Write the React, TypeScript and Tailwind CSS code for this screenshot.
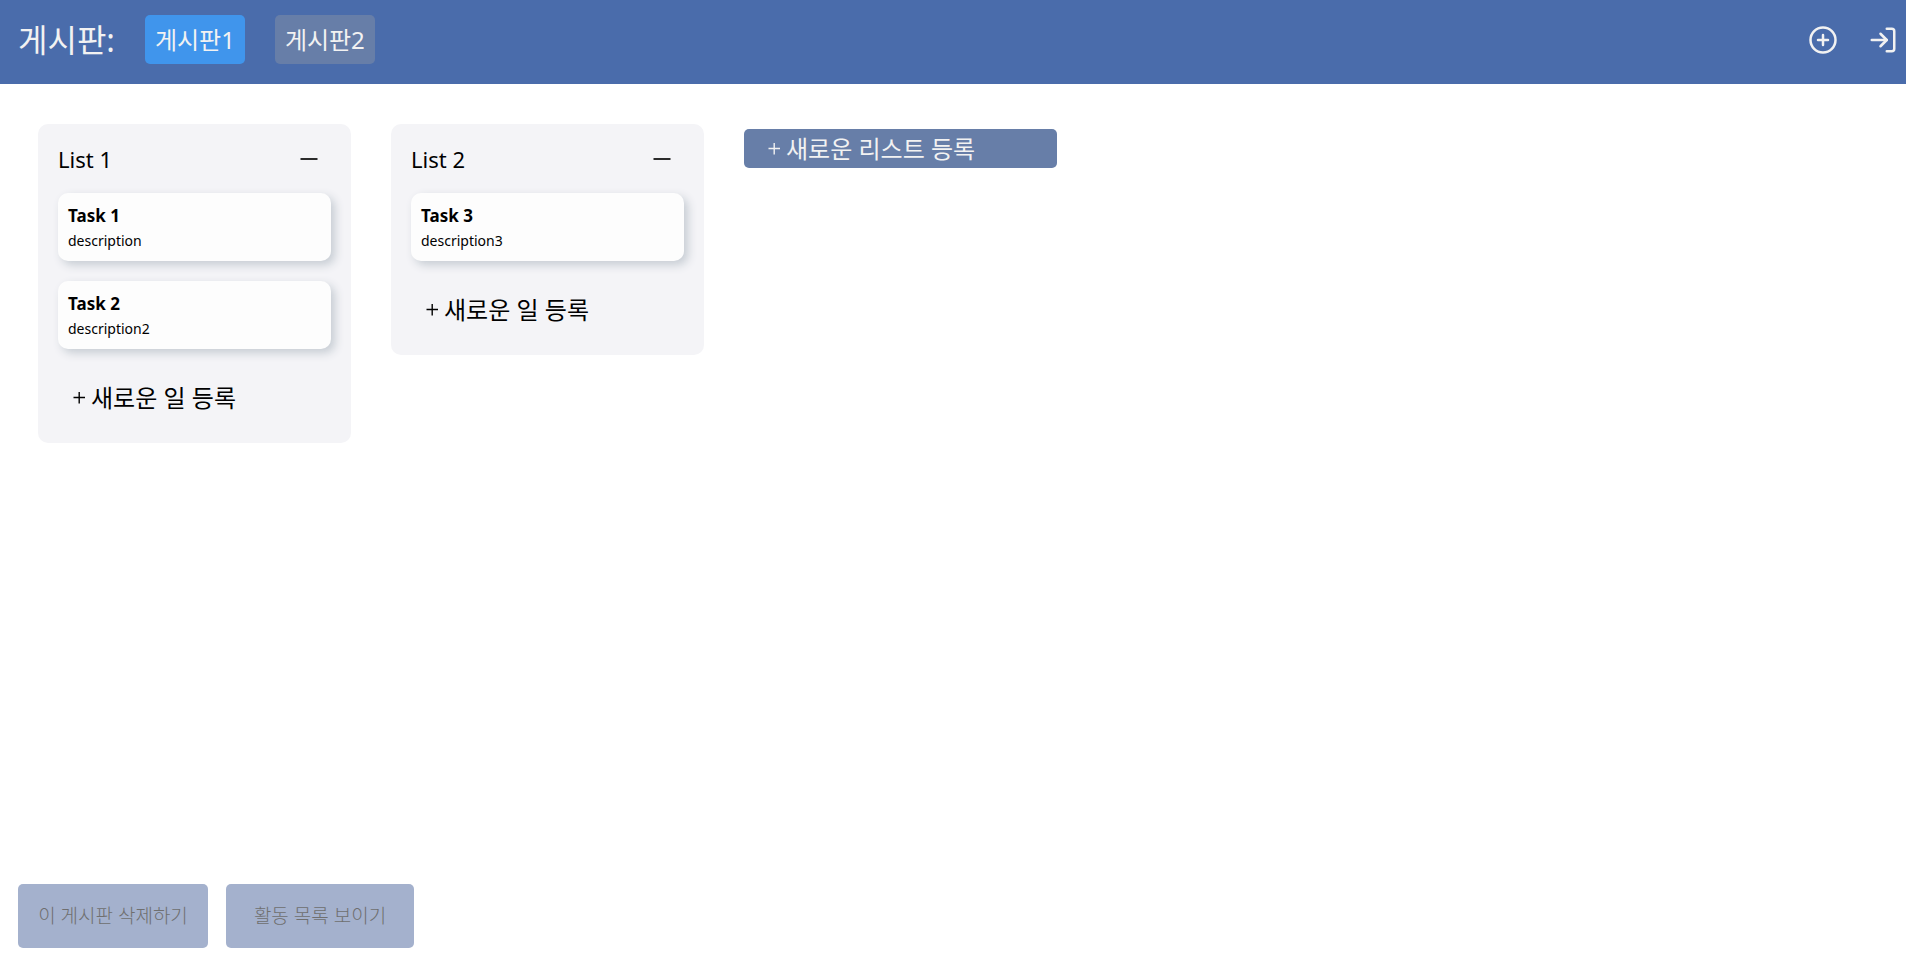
import React from 'react';
import { FiLogIn, FiPlusCircle } from 'react-icons/fi';

type Task = { id: string; title: string; description: string };
type List = { id: string; title: string; tasks: Task[] };

const boards = ['게시판1', '게시판2'];

const lists: List[] = [
  {
    id: 'list-1',
    title: 'List 1',
    tasks: [
      { id: 'task-1', title: 'Task 1', description: 'description' },
      { id: 'task-2', title: 'Task 2', description: 'description2' },
    ],
  },
  {
    id: 'list-2',
    title: 'List 2',
    tasks: [{ id: 'task-3', title: 'Task 3', description: 'description3' }],
  },
];

function PlusIcon() {
  return (
    <svg viewBox="0 0 12 12" className="size-3 shrink-0" fill="none" stroke="currentColor" aria-hidden="true">
      <path d="M0.5 5.5h11.5M6.2 0v11.5" strokeWidth="1.4" />
    </svg>
  );
}

function MinusIcon() {
  return (
    <svg viewBox="0 0 18 18" className="size-[18px]" fill="none" stroke="currentColor" aria-hidden="true">
      <path d="M0.5 9h17" strokeWidth="2" />
    </svg>
  );
}

function TaskCard({ task }: { task: Task }) {
  return (
    <li className="rounded-[10px] bg-[#fdfdfd] p-[10px] shadow-[4px_4px_10px_#c6ccd3]">
      <h3 className="text-[17px] leading-[26px] font-bold">{task.title}</h3>
      <p className="pt-0.5 text-sm">{task.description}</p>
    </li>
  );
}

function ListColumn({ list }: { list: List }) {
  return (
    <section className="w-[313px] shrink-0 rounded-[10px] bg-[#f4f4f7] p-5">
      <header className="mb-[19px] flex items-center justify-between pr-[13px]">
        <h2 className="text-[22px] leading-[30px]">{list.title}</h2>
        <button type="button" aria-label={`${list.title} 삭제`} className="text-[#2b2b2b]">
          <MinusIcon />
        </button>
      </header>
      <ul className="flex flex-col gap-5">
        {list.tasks.map((task) => (
          <TaskCard key={task.id} task={task} />
        ))}
      </ul>
      <button type="button" className="mt-6 flex h-[50px] w-full items-center gap-1.5 pl-[15px] text-2xl">
        <PlusIcon />
        새로운 일 등록
      </button>
    </section>
  );
}

export default function App() {
  return (
    <div className="flex min-h-screen flex-col bg-white font-['Noto_Sans','Noto_Sans_CJK_KR',sans-serif] text-black">
      <header className="flex h-[84px] items-start justify-between bg-[#4a6cab] pr-2 pl-[18px] text-[#f2f2f2]">
        <div className="flex pt-[15px]">
          <h1 className="mr-[30px] text-[32px] leading-[50px]">게시판:</h1>
          <nav className="flex gap-[30px]">
            {boards.map((board, index) => (
              <button
                key={board}
                type="button"
                className={`h-[49px] rounded-[5px] px-[10px] text-2xl ${index === 0 ? 'bg-[#4095ec]' : 'bg-[#677ea8]'}`}
              >
                {board}
              </button>
            ))}
          </nav>
        </div>
        <div className="flex gap-[30px] pt-[25px]">
          <button type="button" aria-label="게시판 추가">
            <FiPlusCircle className="size-[30px]" />
          </button>
          <button type="button" aria-label="로그인">
            <FiLogIn className="size-[30px]" />
          </button>
        </div>
      </header>

      <main className="flex flex-1 items-start gap-10 overflow-x-auto pt-10 pl-[38px]">
        {lists.map((list) => (
          <ListColumn key={list.id} list={list} />
        ))}
        <button
          type="button"
          className="mt-[5px] flex h-[39px] w-[313px] shrink-0 items-center gap-1.5 rounded-[5px] bg-[#677ea8] pl-6 text-2xl text-[#f2f2f2]"
        >
          <PlusIcon />
          새로운 리스트 등록
        </button>
      </main>

      <footer className="flex gap-[18px] px-[18px] pb-[25px]">
        <button type="button" className="h-16 w-[190px] rounded-[5px] bg-[#a4b1cd] text-[19px] font-light text-[#6f6f6f]">
          이 게시판 삭제하기
        </button>
        <button type="button" className="h-16 w-[188px] rounded-[5px] bg-[#a4b1cd] text-[19px] font-light text-[#6f6f6f]">
          활동 목록 보이기
        </button>
      </footer>
    </div>
  );
}
